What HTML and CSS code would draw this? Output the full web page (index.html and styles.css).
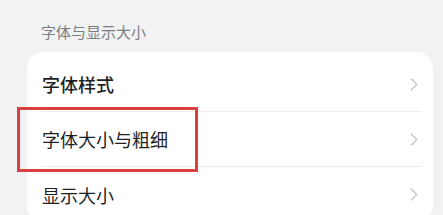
FILE: index.html
```html
<!DOCTYPE html>
<html lang="zh-CN">
<head>
    <meta charset="UTF-8">
    <meta name="viewport" content="width=device-width, initial-scale=1.0">
    <title>字体与显示大小</title>
    <link rel="stylesheet" href="styles.css">
</head>
<body>
    <!-- Section title -->
    <div class="section-title">字体与显示大小</div>

    <!-- Settings card -->
    <div class="card">
        <div class="row">
            <span class="row-label strong">字体样式</span>
            <svg class="chevron" width="8" height="13" viewBox="0 0 8 13"><polyline points="1.2,1 6.8,6.5 1.2,12" /></svg>
        </div>
        <div class="row">
            <span class="row-label">字体大小与粗细</span>
            <svg class="chevron" width="8" height="13" viewBox="0 0 8 13"><polyline points="1.2,1 6.8,6.5 1.2,12" /></svg>
            <div class="mark"></div>
        </div>
        <div class="row">
            <span class="row-label">显示大小</span>
            <svg class="chevron" width="8" height="13" viewBox="0 0 8 13"><polyline points="1.2,1 6.8,6.5 1.2,12" /></svg>
        </div>
    </div>
</body>
</html>
```

FILE: styles.css
```css
/* Global Styles */
body {
    font-family: "Noto Sans CJK SC", "Noto Sans", sans-serif;
    margin: 0;
    padding: 22px 10px 0 27px;
    background-color: #f1f2f4;
    overflow: hidden;
}

.section-title {
    font-size: 15px;
    line-height: 20px;
    color: #7d7e80;
    padding-left: 14px;
    margin-bottom: 10px;
}

/* Card */
.card {
    background-color: #fff;
    border-radius: 16px;
    padding-top: 5px;
}

.row {
    position: relative;
    display: flex;
    justify-content: space-between;
    align-items: center;
    height: 55px;
    margin: 0 11px 0 14px;
    padding: 0 4px 0 1px;
    border-bottom: 1px solid #ececec;
    box-sizing: border-box;
}

.row:last-child {
    border-bottom: none;
}

.row-label {
    font-size: 18px;
    color: #1f1f1f;
}

.row-label.strong {
    font-weight: 500;
}

.chevron polyline {
    fill: none;
    stroke: #c6c6c8;
    stroke-width: 1.4;
    stroke-linecap: round;
    stroke-linejoin: round;
}

/* Red annotation box */
.mark {
    position: absolute;
    left: -24px;
    top: -5px;
    width: 181px;
    height: 65px;
    border: 3px solid #d8413f;
    box-sizing: border-box;
}
```
